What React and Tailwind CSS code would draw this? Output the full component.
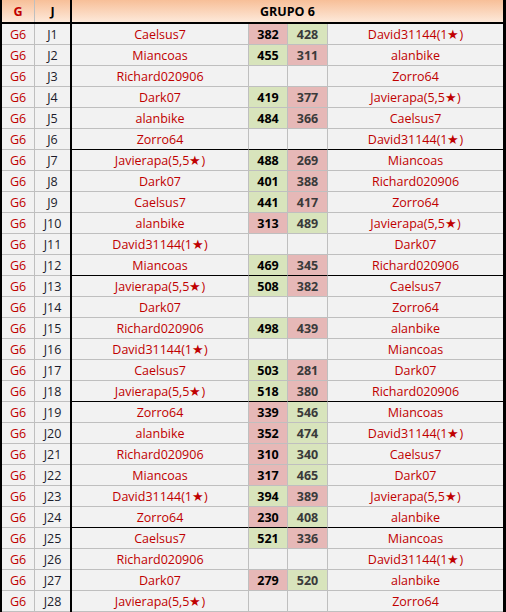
import React from 'react';

const rows = [
  ['Caelsus7', 382, 428, 'David31144(1★)'],
  ['Miancoas', 455, 311, 'alanbike'],
  ['Richard020906', null, null, 'Zorro64'],
  ['Dark07', 419, 377, 'Javierapa(5,5★)'],
  ['alanbike', 484, 366, 'Caelsus7'],
  ['Zorro64', null, null, 'David31144(1★)'],
  ['Javierapa(5,5★)', 488, 269, 'Miancoas'],
  ['Dark07', 401, 388, 'Richard020906'],
  ['Caelsus7', 441, 417, 'Zorro64'],
  ['alanbike', 313, 489, 'Javierapa(5,5★)'],
  ['David31144(1★)', null, null, 'Dark07'],
  ['Miancoas', 469, 345, 'Richard020906'],
  ['Javierapa(5,5★)', 508, 382, 'Caelsus7'],
  ['Dark07', null, null, 'Zorro64'],
  ['Richard020906', 498, 439, 'alanbike'],
  ['David31144(1★)', null, null, 'Miancoas'],
  ['Caelsus7', 503, 281, 'Dark07'],
  ['Javierapa(5,5★)', 518, 380, 'Richard020906'],
  ['Zorro64', 339, 546, 'Miancoas'],
  ['alanbike', 352, 474, 'David31144(1★)'],
  ['Richard020906', 310, 340, 'Caelsus7'],
  ['Miancoas', 317, 465, 'Dark07'],
  ['David31144(1★)', 394, 389, 'Javierapa(5,5★)'],
  ['Zorro64', 230, 408, 'alanbike'],
  ['Caelsus7', 521, 336, 'Miancoas'],
  ['Richard020906', null, null, 'David31144(1★)'],
  ['Dark07', 279, 520, 'alanbike'],
  ['Javierapa(5,5★)', null, null, 'Zorro64'],
];

// colour of a score cell: winner green, loser pink, empty grey
const scoreBg = (a, b) => {
  if (a == null) return 'bg-[#f2f2f2]';
  return a > b ? 'bg-[#d8e4bc]' : 'bg-[#e6b8b7]';
};

const Row = ({ idx, data }) => {
  const [home, s1, s2, away] = data;
  // a black rule closes every block of six matches
  const blockEnd = (idx + 1) % 6 === 0;
  const line = blockEnd ? 'border-b-black' : 'border-b-[#bfbfbf]';
  return (
    <div className="flex h-[21px]">
      <div className="w-[2px] bg-black" />
      <div className="w-[33px] pt-[3px] border-r border-b border-[#bfbfbf] flex items-center justify-center text-[#c00000]">
        G6
      </div>
      <div className="w-[35px] pt-[3px] border-b border-[#bfbfbf] flex items-center justify-center text-[#1b1b2b]">
        J{idx + 1}
      </div>
      <div className="w-[2px] bg-black" />
      <div className={`w-[177px] pt-[3px] border-r border-r-[#bfbfbf] border-b ${line} flex items-center justify-center text-[#c00000]`}>
        {home}
      </div>
      <div className={`w-[39px] pt-[3px] border-r border-r-[#bfbfbf] border-b ${line} flex items-center justify-center font-bold text-black ${scoreBg(s1, s2)}`}>
        {s1}
      </div>
      <div className={`w-[40px] pt-[3px] border-r border-r-[#bfbfbf] border-b ${line} flex items-center justify-center font-bold text-[#3a3a3a] ${scoreBg(s2, s1)}`}>
        {s2}
      </div>
      <div className={`w-[175px] pt-[3px] border-b ${line} flex items-center justify-center text-[#c00000]`}>
        {away}
      </div>
      <div className="w-[3px] bg-black" />
    </div>
  );
};

export default function App() {
  return (
    <div
      className="w-[506px] h-[612px] overflow-hidden bg-[#f2f2f2] text-[12.5px] leading-none"
      style={{ fontFamily: '"Open Sans", "Liberation Sans", sans-serif' }}
    >
      <div className="flex h-[24px] border-b-2 border-black bg-gradient-to-b from-[#f7bf98] to-[#fde9da]">
        <div className="w-[2px] bg-black" />
        <div className="w-[33px] pt-[2px] border-r border-[#bfbfbf] flex items-center justify-center font-bold text-[#c00000]">
          G
        </div>
        <div className="w-[35px] pt-[2px] flex items-center justify-center font-bold text-black">J</div>
        <div className="w-[2px] bg-black" />
        <div className="w-[431px] pt-[2px] flex items-center justify-center font-bold text-black">GRUPO 6</div>
        <div className="w-[3px] bg-black" />
      </div>
      {rows.map((r, i) => (
        <Row key={i} idx={i} data={r} />
      ))}
    </div>
  );
}
